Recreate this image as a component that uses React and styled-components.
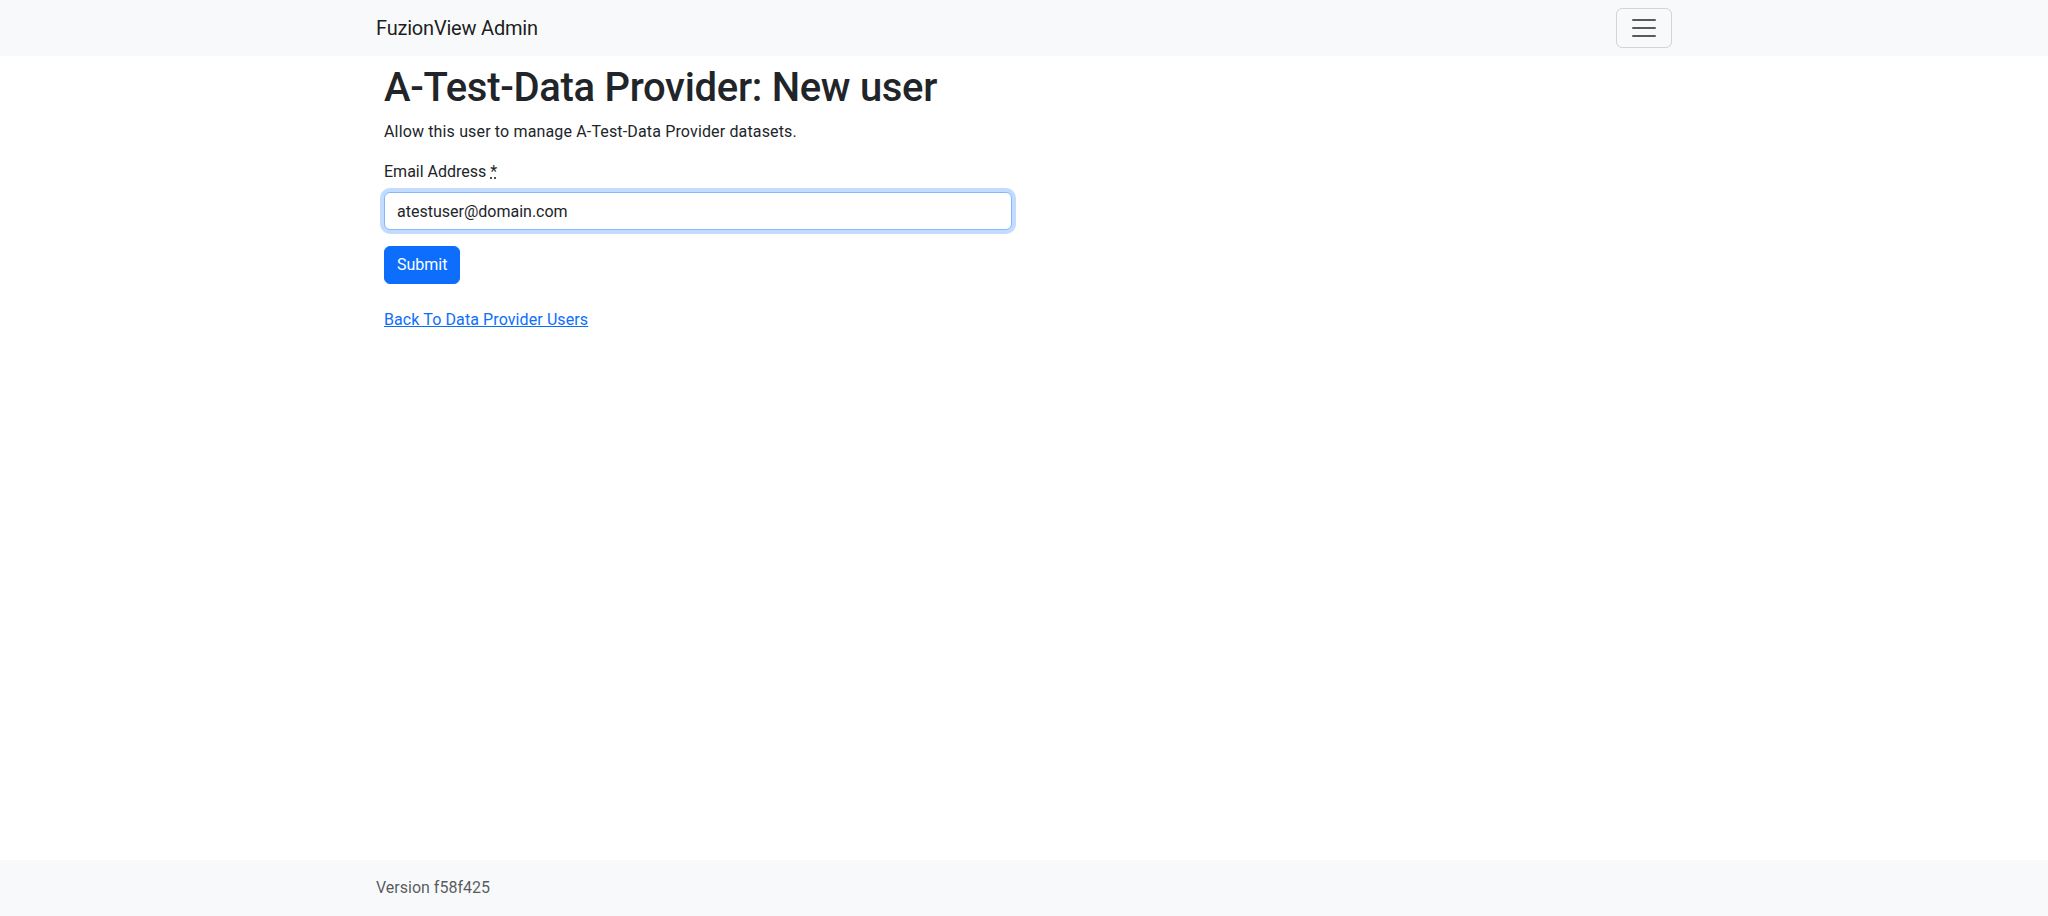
import React, { useState } from "react";
import styled, { createGlobalStyle } from "styled-components";

const GlobalStyle = createGlobalStyle`
  * { box-sizing: border-box; }
  html, body { height: 100%; }
  body {
    margin: 0;
    font-family: Roboto, "Liberation Sans", sans-serif;
    font-size: 16px;
    line-height: 1.5;
    color: #212529;
    background: #fff;
  }
`;

export default function App() {
  const [email, setEmail] = useState("atestuser@domain.com");

  return (
    <>
      <GlobalStyle />
      <Page>
        <Navbar>
          <Container>
            <Brand href="#">FuzionView Admin</Brand>
            <Toggler aria-label="Toggle navigation">
              <svg width="30" height="30" viewBox="0 0 30 30">
                <path
                  stroke="rgba(33,37,41,0.75)"
                  strokeLinecap="round"
                  strokeMiterlimit="10"
                  strokeWidth="2"
                  d="M4 7h22M4 15h22M4 23h22"
                />
              </svg>
            </Toggler>
          </Container>
        </Navbar>

        <Main>
          <Container>
            <Content>
              <Title>A-Test-Data Provider: New user</Title>
              <Lead>Allow this user to manage A-Test-Data Provider datasets.</Lead>
              <Form onSubmit={(e) => e.preventDefault()}>
                <Label htmlFor="email">
                  Email Address <Required title="required">*</Required>
                </Label>
                <Input
                  id="email"
                  type="email"
                  value={email}
                  onChange={(e) => setEmail(e.target.value)}
                />
                <SubmitButton type="submit">Submit</SubmitButton>
              </Form>
              <BackLink href="#">Back To Data Provider Users</BackLink>
            </Content>
          </Container>
        </Main>

        <Footer>
          <Container>
            <Version>Version f58f425</Version>
          </Container>
        </Footer>
      </Page>
    </>
  );
}

const Page = styled.div`
  height: 100vh;
  display: flex;
  flex-direction: column;
  overflow: hidden;
`;

const Container = styled.div`
  width: 100%;
  max-width: 1320px;
  margin: 0 auto;
  padding: 0 12px;
  display: flex;
  align-items: center;
  justify-content: space-between;
`;

const Navbar = styled.nav`
  flex: none;
  height: 56px;
  background: #f8f9fa;
  display: flex;
  align-items: center;
`;

const Brand = styled.a`
  font-size: 20px;
  line-height: 30px;
  color: rgba(0, 0, 0, 0.9);
  text-decoration: none;
  letter-spacing: -0.2px;
`;

const Toggler = styled.button`
  width: 56px;
  height: 40px;
  padding: 4px 12px;
  background: transparent;
  border: 1px solid rgba(0, 0, 0, 0.15);
  border-radius: 6px;
  display: flex;
  align-items: center;
  justify-content: center;
  cursor: pointer;
`;

const Main = styled.main`
  flex: 1;
  padding-top: 8px;
`;

const Content = styled.div`
  width: 100%;
  padding: 0 8px;
  display: flex;
  flex-direction: column;
  align-items: flex-start;
`;

const Title = styled.h1`
  margin: 0 0 8px;
  font-size: 40px;
  font-weight: 500;
  line-height: 1.2;
  letter-spacing: -0.3px;
`;

const Lead = styled.p`
  margin: 0 0 16px;
  letter-spacing: 0.15px;
`;

const Form = styled.form`
  width: 628px;
  display: flex;
  flex-direction: column;
  align-items: flex-start;
`;

const Label = styled.label`
  margin-bottom: 8px;
`;

const Required = styled.abbr`
  text-decoration: underline dotted;
  cursor: help;
`;

const Input = styled.input`
  width: 100%;
  height: 38px;
  padding: 6px 12px;
  font: inherit;
  color: #212529;
  border: 1px solid #86b7fe;
  border-radius: 6px;
  box-shadow: 0 0 0 4px rgba(13, 110, 253, 0.25);
  outline: none;
  margin-bottom: 16px;
`;

const SubmitButton = styled.button`
  height: 38px;
  padding: 6px 12px;
  font: inherit;
  color: #fff;
  background: #0d6efd;
  border: 1px solid #0d6efd;
  border-radius: 6px;
  cursor: pointer;
`;

const BackLink = styled.a`
  margin-top: 24px;
  color: #0d6efd;
  text-decoration: underline;
  letter-spacing: 0.1px;
`;

const Footer = styled.footer`
  flex: none;
  height: 56px;
  background: #f8f9fa;
  display: flex;
  align-items: center;
`;

const Version = styled.span`
  color: rgba(33, 37, 41, 0.75);
`;
